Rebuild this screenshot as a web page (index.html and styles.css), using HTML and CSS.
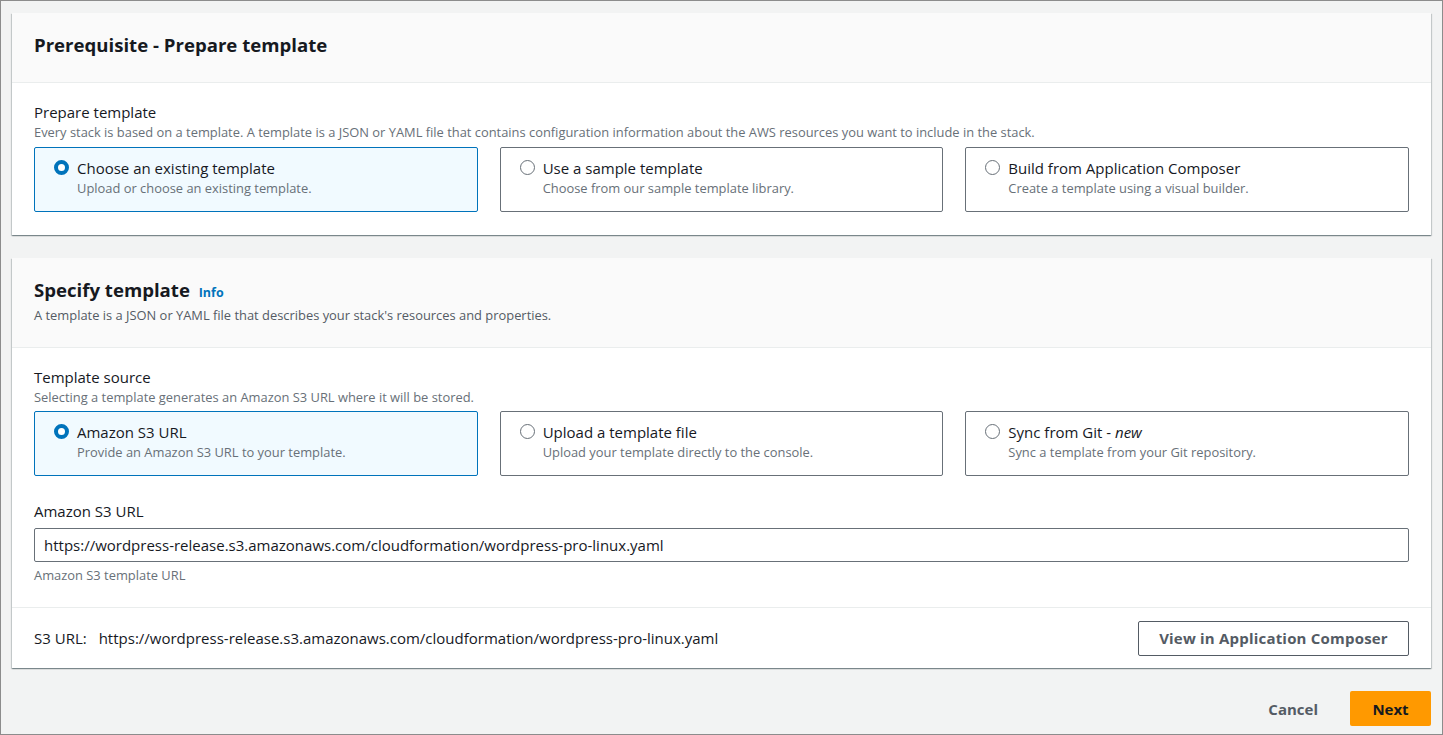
FILE: index.html
```html
<!DOCTYPE html>
<html>
<head>
<meta charset="utf-8">
<link rel="stylesheet" href="styles.css">
</head>
<body>
<div class="page">
  <section class="panel">
    <header class="panel-head panel-head-1">
      <h2 class="panel-title">Prerequisite - Prepare template</h2>
    </header>
    <div class="panel-body panel-body-1">
      <div class="field-label">Prepare template</div>
      <div class="field-desc">Every stack is based on a template. A template is a JSON or YAML file that contains configuration information about the AWS resources you want to include in the stack.</div>
      <div class="tiles">
        <div class="tile selected">
          <span class="radio on"></span>
          <div class="tile-text">
            <div class="tile-title">Choose an existing template</div>
            <div class="tile-desc">Upload or choose an existing template.</div>
          </div>
        </div>
        <div class="tile">
          <span class="radio"></span>
          <div class="tile-text">
            <div class="tile-title">Use a sample template</div>
            <div class="tile-desc">Choose from our sample template library.</div>
          </div>
        </div>
        <div class="tile">
          <span class="radio"></span>
          <div class="tile-text">
            <div class="tile-title">Build from Application Composer</div>
            <div class="tile-desc">Create a template using a visual builder.</div>
          </div>
        </div>
      </div>
    </div>
  </section>

  <section class="panel panel-2">
    <header class="panel-head panel-head-2">
      <h2 class="panel-title">Specify template <a class="info">Info</a></h2>
      <div class="panel-desc">A template is a JSON or YAML file that describes your stack's resources and properties.</div>
    </header>
    <div class="panel-body panel-body-2">
      <div class="field-label">Template source</div>
      <div class="field-desc">Selecting a template generates an Amazon S3 URL where it will be stored.</div>
      <div class="tiles">
        <div class="tile selected">
          <span class="radio on"></span>
          <div class="tile-text">
            <div class="tile-title">Amazon S3 URL</div>
            <div class="tile-desc">Provide an Amazon S3 URL to your template.</div>
          </div>
        </div>
        <div class="tile">
          <span class="radio"></span>
          <div class="tile-text">
            <div class="tile-title">Upload a template file</div>
            <div class="tile-desc">Upload your template directly to the console.</div>
          </div>
        </div>
        <div class="tile">
          <span class="radio"></span>
          <div class="tile-text">
            <div class="tile-title">Sync from Git - <em>new</em></div>
            <div class="tile-desc">Sync a template from your Git repository.</div>
          </div>
        </div>
      </div>
      <div class="field-label url-label">Amazon S3 URL</div>
      <div class="input">https://wordpress-release.s3.amazonaws.com/cloudformation/wordpress-pro-linux.yaml</div>
      <div class="hint">Amazon S3 template URL</div>
    </div>
    <div class="panel-foot">
      <div class="s3url"><span class="s3label">S3 URL:</span>https://wordpress-release.s3.amazonaws.com/cloudformation/wordpress-pro-linux.yaml</div>
      <button class="btn-normal">View in Application Composer</button>
    </div>
  </section>

  <div class="actions">
    <button class="btn-link">Cancel</button>
    <button class="btn-primary">Next</button>
  </div>
</div>
</body>
</html>
```

FILE: styles.css
```css
* { box-sizing: border-box; }
html, body { margin: 0; padding: 0; }
body {
  font-family: "Open Sans", "Noto Sans", sans-serif;
  color: #16191f;
  background: #f2f3f3;
}
.page {
  width: 1443px;
  height: 735px;
  border: 1px solid #8c8c8c;
  padding: 12px 11px 0 11px;
  background: #f2f3f3;
}
.panel {
  background: #fff;
  box-shadow: 0 1px 1px 0 rgba(0,28,36,0.3), 1px 1px 1px 0 rgba(0,28,36,0.15), -1px 1px 1px 0 rgba(0,28,36,0.15);
}
.panel-2 { margin-top: 23px; }
.panel-head {
  background: #fafafa;
  border-bottom: 1px solid #eaeded;
  padding: 0 22px;
}
.panel-head-1 { height: 70px; padding-top: 18px; }
.panel-head-2 { height: 90px; padding-top: 18px; }
.panel-title {
  margin: 0;
  font-size: 18.6px;
  font-weight: 700;
  line-height: 28px;
  color: #16191f;
}
.info {
  font-size: 12.5px;
  font-weight: 700;
  color: #0073bb;
  margin-left: 4px;
}
.panel-desc {
  font-size: 12.9px;
  color: #545b64;
  line-height: 18px;
  margin-top: -1px;
}
.panel-body { padding: 18px 22px 0 22px; }
.panel-body-1 { padding-bottom: 23px; }
.panel-body-2 { padding-bottom: 23px; border-bottom: 1px solid #eaeded; }
.field-label {
  font-size: 15px;
  line-height: 22px;
  color: #16191f;
}
.field-desc {
  font-size: 12.9px;
  line-height: 18px;
  color: #687078;
  margin-bottom: 5px;
}
.panel-body-1 .field-desc { margin-bottom: 6px; }
.tiles {
  display: grid;
  grid-template-columns: 1fr 1fr 1fr;
  gap: 22px;
}
.tile {
  display: flex;
  align-items: flex-start;
  height: 65px;
  border: 1px solid #687078;
  border-radius: 2px;
  padding: 9px 19px;
  background: #fff;
}
.tile.selected {
  background: #f1faff;
  border-color: #0073bb;
}
.radio {
  flex: none;
  width: 15px;
  height: 15px;
  border-radius: 50%;
  border: 1px solid #687078;
  margin-top: 3px;
  margin-right: 8px;
  background: #fff;
}
.radio.on {
  border: 4px solid #0073bb;
}
.tile-title {
  font-size: 15px;
  line-height: 22px;
  color: #16191f;
}
.tile-desc {
  font-size: 12.9px;
  line-height: 18px;
  color: #687078;
}
.url-label { margin-top: 24px; }
.input {
  margin-top: 6px;
  height: 34px;
  border: 1px solid #687078;
  border-radius: 2px;
  padding: 5px 9px;
  font-size: 15px;
  line-height: 22px;
  color: #16191f;
}
.hint {
  font-size: 12.9px;
  line-height: 18px;
  color: #687078;
  margin-top: 4px;
}
.panel-foot {
  display: flex;
  align-items: center;
  justify-content: space-between;
  height: 60px;
  padding: 0 22px;
}
.s3url { font-size: 15px; color: #16191f; }
.s3label { margin-right: 12px; }
button {
  font-family: inherit;
  cursor: pointer;
}
.btn-normal {
  width: 271px;
  height: 35px;
  border: 1px solid #545b64;
  border-radius: 2px;
  background: #fff;
  color: #545b64;
  font-size: 15px;
  font-weight: 700;
  letter-spacing: 0.2px;
}
.actions {
  display: flex;
  justify-content: flex-end;
  align-items: center;
  margin-top: 23px;
  gap: 20px;
}
.btn-link {
  border: none;
  background: transparent;
  color: #545b64;
  font-size: 15px;
  font-weight: 700;
  padding: 0 12px;
  height: 34px;
}
.btn-primary {
  width: 81px;
  height: 35px;
  border: none;
  border-radius: 2px;
  background: #ff9900;
  color: #16191f;
  font-size: 15px;
  font-weight: 700;
}
```
